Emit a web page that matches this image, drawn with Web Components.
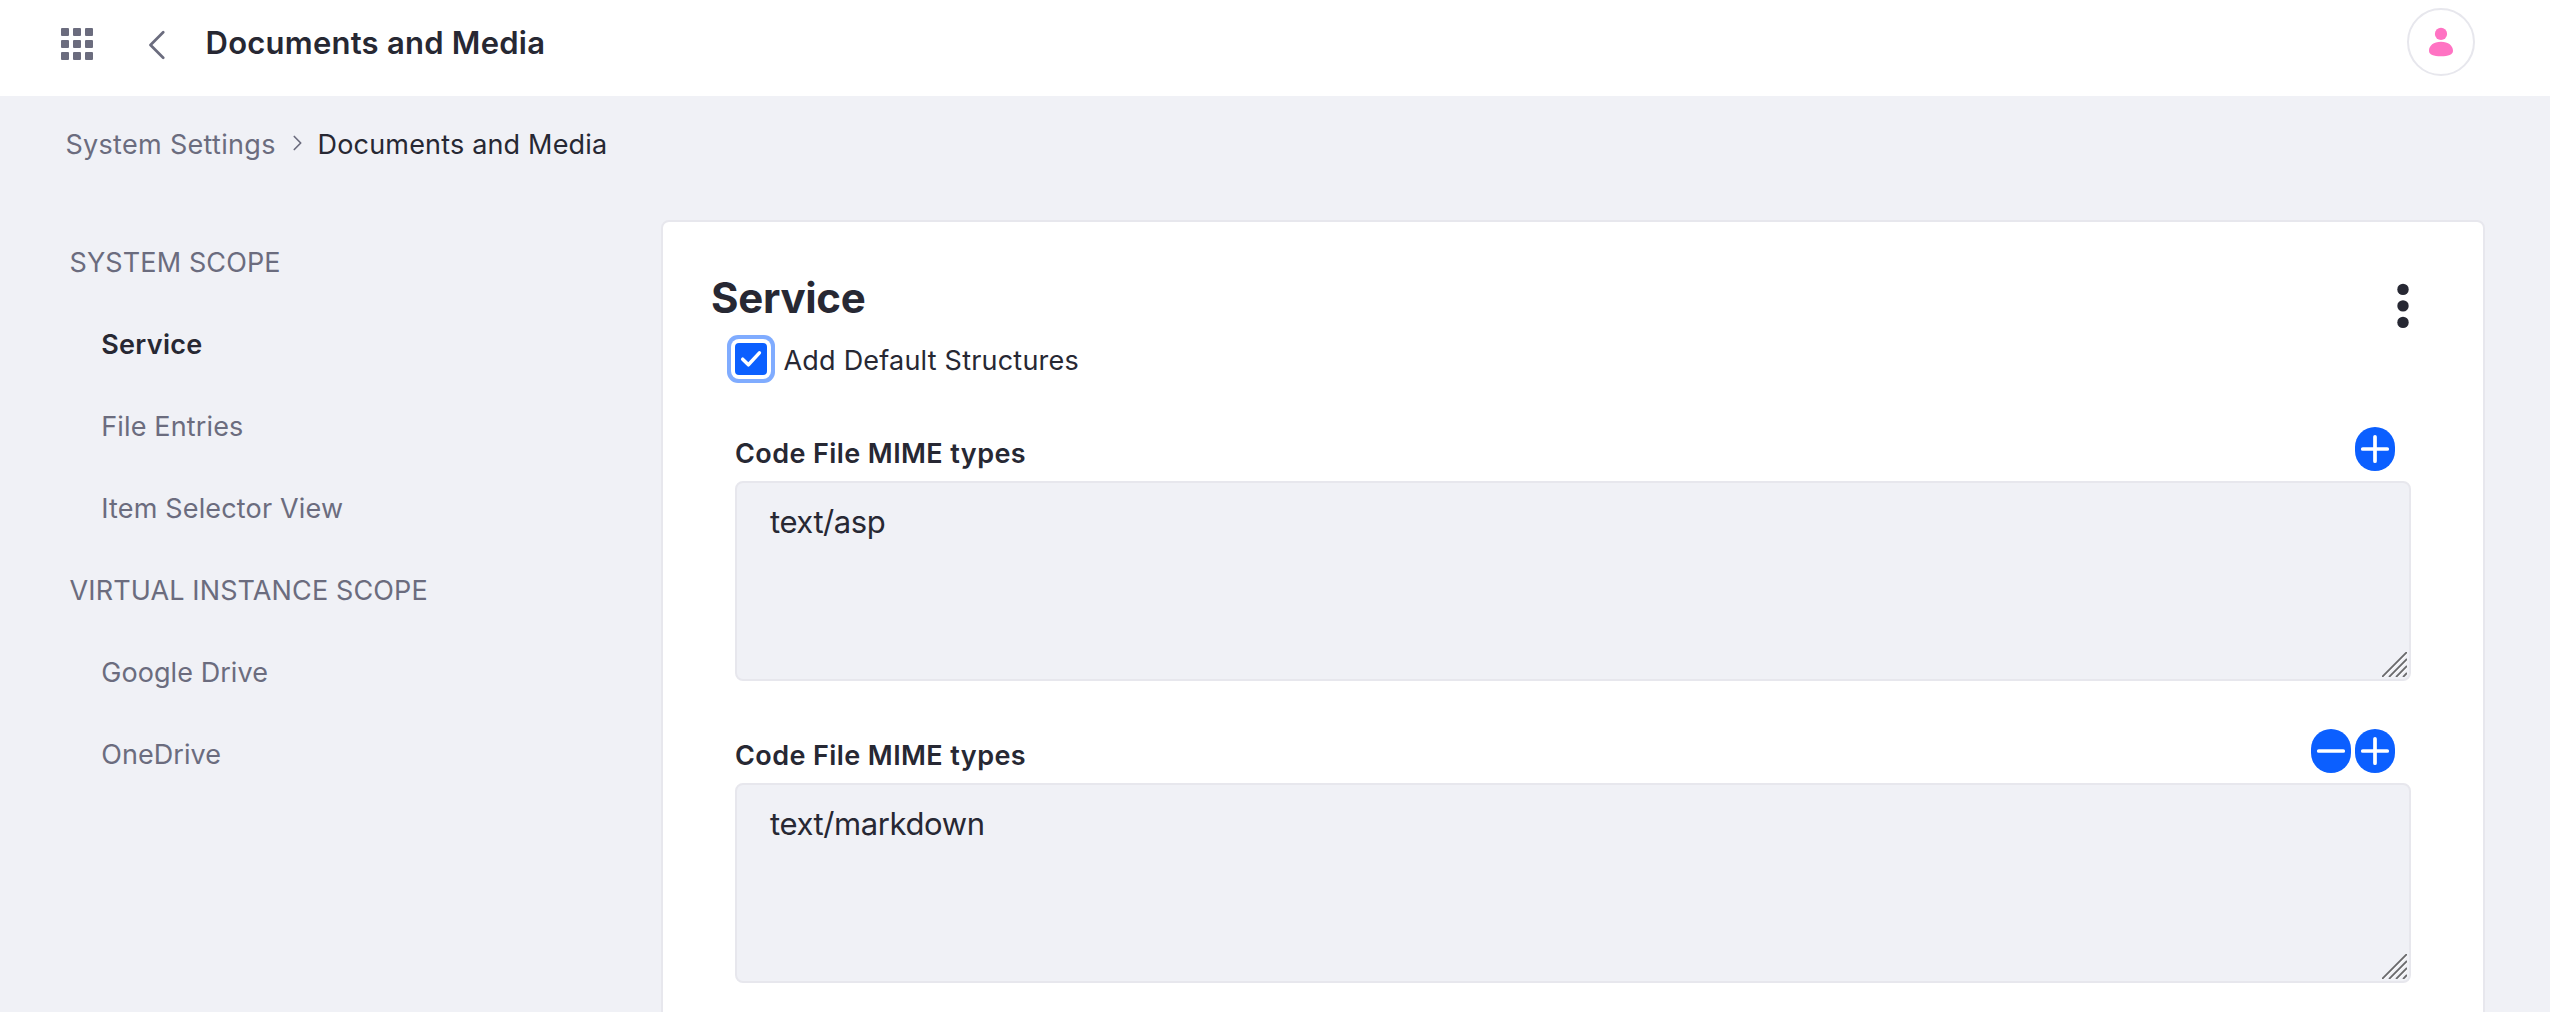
<!DOCTYPE html>
<html lang="en">
<head>
<meta charset="utf-8">
<title>Documents and Media</title>
<style>
html, body { margin: 0; height: 100%; }
body {
  --ink: #272833;
  --muted: #6b6c7e;
  --surface: #f0f1f6;
  --line: #e7e7ed;
  --primary: #0b5fff;
  background: var(--surface);
  color: var(--ink);
  font: 400 27px/40px Inter, "Liberation Sans", sans-serif;
  overflow: hidden;
}
</style>
</head>
<body>
<settings-page>
  <app-header slot="header">Documents and Media</app-header>
  <bread-crumb slot="crumbs"><span slot="parent">System Settings</span>Documents and Media</bread-crumb>
  <side-nav slot="nav">
    <nav-item heading style="--ls:.11px">SYSTEM SCOPE</nav-item>
    <nav-item active style="--ls:.31px">Service</nav-item>
    <nav-item style="--ls:.15px">File Entries</nav-item>
    <nav-item style="--ls:.17px">Item Selector View</nav-item>
    <nav-item heading style="--ls:.13px">VIRTUAL INSTANCE SCOPE</nav-item>
    <nav-item style="--ls:.07px">Google Drive</nav-item>
    <nav-item style="--ls:.06px">OneDrive</nav-item>
  </side-nav>
  <settings-card>
    <span slot="title">Service</span>
    <check-field>Add Default Structures</check-field>
    <mime-field label="Code File MIME types" style="--ls:-.45px">text/asp</mime-field>
    <mime-field label="Code File MIME types" removable style="--ls:-.4px">text/markdown</mime-field>
  </settings-card>
</settings-page>

<script>
const define = (name, html) => customElements.define(name, class extends HTMLElement {
  constructor() {
    super();
    this.attachShadow({ mode: 'open' }).innerHTML = html(this);
  }
});

define('settings-page', () => `
<style>
  :host { display: flex; flex-direction: column; height: 1012px; overflow: hidden; }
  main { display: flex; padding: 28px 65px 0 0; flex: 1; min-height: 0; }
  .nav { flex: 0 0 661px; }
  .body { flex: 1; display: flex; }
</style>
<slot name="header"></slot>
<slot name="crumbs"></slot>
<main><div class="nav"><slot name="nav"></slot></div><div class="body"><slot></slot></div></main>`);

define('app-header', () => `
<style>
  :host { display: flex; flex: none; align-items: flex-start; box-sizing: border-box; height: 96px; padding: 8px 75px 0 61px; background: #fff; }
  svg { display: block; flex: none; }
  .apps { margin-top: 20px; fill: var(--muted); }
  .back { margin: 22px 0 0 55px; }
  h1 { margin: 15px auto 0 40.5px; font: 600 31px/40px Inter, sans-serif; letter-spacing: .24px; }
  .avatar { box-sizing: border-box; width: 68px; height: 68px; border: 2px solid var(--line); border-radius: 50%; }
</style>
<svg class="apps" width="32" height="32" viewBox="0 0 32 32">
  <rect width="8" height="8" rx="1"/><rect x="12" width="8" height="8" rx="1"/><rect x="24" width="8" height="8" rx="1"/>
  <rect y="12" width="8" height="8" rx="1"/><rect x="12" y="12" width="8" height="8" rx="1"/><rect x="24" y="12" width="8" height="8" rx="1"/>
  <rect y="24" width="8" height="8" rx="1"/><rect x="12" y="24" width="8" height="8" rx="1"/><rect x="24" y="24" width="8" height="8" rx="1"/>
</svg>
<svg class="back" width="17" height="30" viewBox="0 0 17 30"><path d="M15.2 2.2 2.500 15l12.700 12.800" fill="none" stroke="#6b6c7e" stroke-width="2.700" stroke-linecap="round" stroke-linejoin="round"/></svg>
<h1><slot></slot></h1>
<div class="avatar"><svg width="64" height="64" viewBox="0 0 64 64" fill="#ff73c3"><circle cx="32" cy="23.9" r="6.1"/><path d="M32 31.8c7.4 0 12 4 12 8.9 0 4-4.6 5.500-12 5.500s-12-1.500-12-5.500c0-4.900 4.600-8.900 12-8.900z"/></svg></div>`);

define('bread-crumb', () => `
<style>
  :host { display: flex; flex: none; align-items: center; height: 96px; padding-left: 65.4px; }
  span { margin-top: 2px; }
  .parent { color: var(--muted); letter-spacing: .312px; width: 227.6px; }
  .here { letter-spacing: .174px; margin-left: 15.6px; }
  svg { display: block; margin-top: -2px; }
</style>
<span class="parent"><slot name="parent"></slot></span>
<svg width="9" height="16" viewBox="0 0 9 16"><path d="M1.300 1.500 7.700 8l-6.400 6.500" fill="none" stroke="#6b6c7e" stroke-width="1.700" stroke-linecap="round" stroke-linejoin="round"/></svg>
<span class="here"><slot></slot></span>`);

define('side-nav', () => `
<style>:host { display: flex; flex-direction: column; padding-top: 2px; }</style>
<slot></slot>`);

define('nav-item', () => `
<style>
  :host { display: flex; align-items: center; height: 82px; padding-left: 101.2px; color: var(--muted); letter-spacing: var(--ls); }
  :host([heading]) { padding-left: 69.5px; }
  :host([active]) { color: var(--ink); font-weight: 600; }
</style>
<slot></slot>`);

define('settings-card', () => `
<style>
  :host { display: block; flex: 1; box-sizing: border-box; height: 900px; padding: 51px 72px 0; background: #fff; border: 2px solid var(--line); border-radius: 8px; }
  header { display: flex; justify-content: space-between; height: 50px; margin: 0 0 18px -24px; }
  h2 { margin: 0; font: 700 42px/50px Inter, sans-serif; letter-spacing: -.3px; }
  svg { display: block; margin: 10px 2px 0 0; }
</style>
<header>
  <h2><slot name="title"></slot></h2>
  <svg width="12" height="46" viewBox="0 0 12 46" fill="#272833"><circle cx="6" cy="6.400" r="5.700"/><circle cx="6" cy="22.900" r="5.700"/><circle cx="6" cy="39.400" r="5.700"/></svg>
</header>
<slot></slot>`);

define('check-field', () => `
<style>
  :host { display: flex; align-items: center; height: 40px; margin-bottom: 46px; letter-spacing: .21px; }
  .box { width: 32px; height: 32px; margin: -4px 16.5px 0 0; border-radius: 4px; background: var(--primary); box-shadow: 0 0 0 4px #fff, 0 0 0 8px #80acff; }
  svg { display: block; }
</style>
<span class="box"><svg width="32" height="32" viewBox="0 0 32 32"><path d="m7.700 16.200 5.700 5.600 11-11.900" fill="none" stroke="#fff" stroke-width="3.500" stroke-linecap="round" stroke-linejoin="round"/></svg></span>
<slot></slot>`);

define('round-button', el => `
<style>
  :host { display: block; width: 40px; height: 44px; border-radius: 20px; background: var(--primary); }
  svg { display: block; }
</style>
<svg width="40" height="44" viewBox="0 0 40 44"><path d="${el.getAttribute('kind') === 'minus' ? 'M7.750 22h24.500' : 'M7.750 22h24.500M20 9.750v24.500'}" stroke="#fff" stroke-width="3.700" stroke-linecap="round"/></svg>`);

define('mime-field', el => `
<style>
  :host { display: flex; flex-direction: column; gap: 10px; margin-bottom: 48px; }
  .head { display: flex; gap: 4px; height: 44px; padding-right: 16px; }
  label { margin: 7px auto 0 0; font-weight: 600; letter-spacing: .41px; }
  .area { display: flex; box-sizing: border-box; height: 200px; padding: 19px 2px 2px 33px; justify-content: space-between; border: 2px solid var(--line); border-radius: 8px; background: var(--surface); font-size: 31px; line-height: 40px; letter-spacing: var(--ls); }
  svg { display: block; align-self: flex-end; }
</style>
<div class="head">
  <label>${el.getAttribute('label')}</label>
  ${el.hasAttribute('removable') ? '<round-button kind="minus"></round-button>' : ''}
  <round-button kind="plus"></round-button>
</div>
<div class="area" role="textbox" aria-multiline="true"><span><slot></slot></span>
  <svg width="25" height="25" viewBox="0 0 25 25" fill="none" stroke-linecap="square">
    <path d="M2.700 24.300 24.300 2.700M9.700 24.300 24.300 9.700M16.700 24.300l7.600-7.600" stroke="#fafafc" stroke-width="1.400"/>
    <path d="M.700 24.300 24.300.700M7.700 24.300 24.300 7.700M14.700 24.300l9.600-9.600M21.700 24.300l2.600-2.600" stroke="#6a6a6c" stroke-width="1.900"/>
  </svg>
</div>`);
</script>
</body>
</html>
